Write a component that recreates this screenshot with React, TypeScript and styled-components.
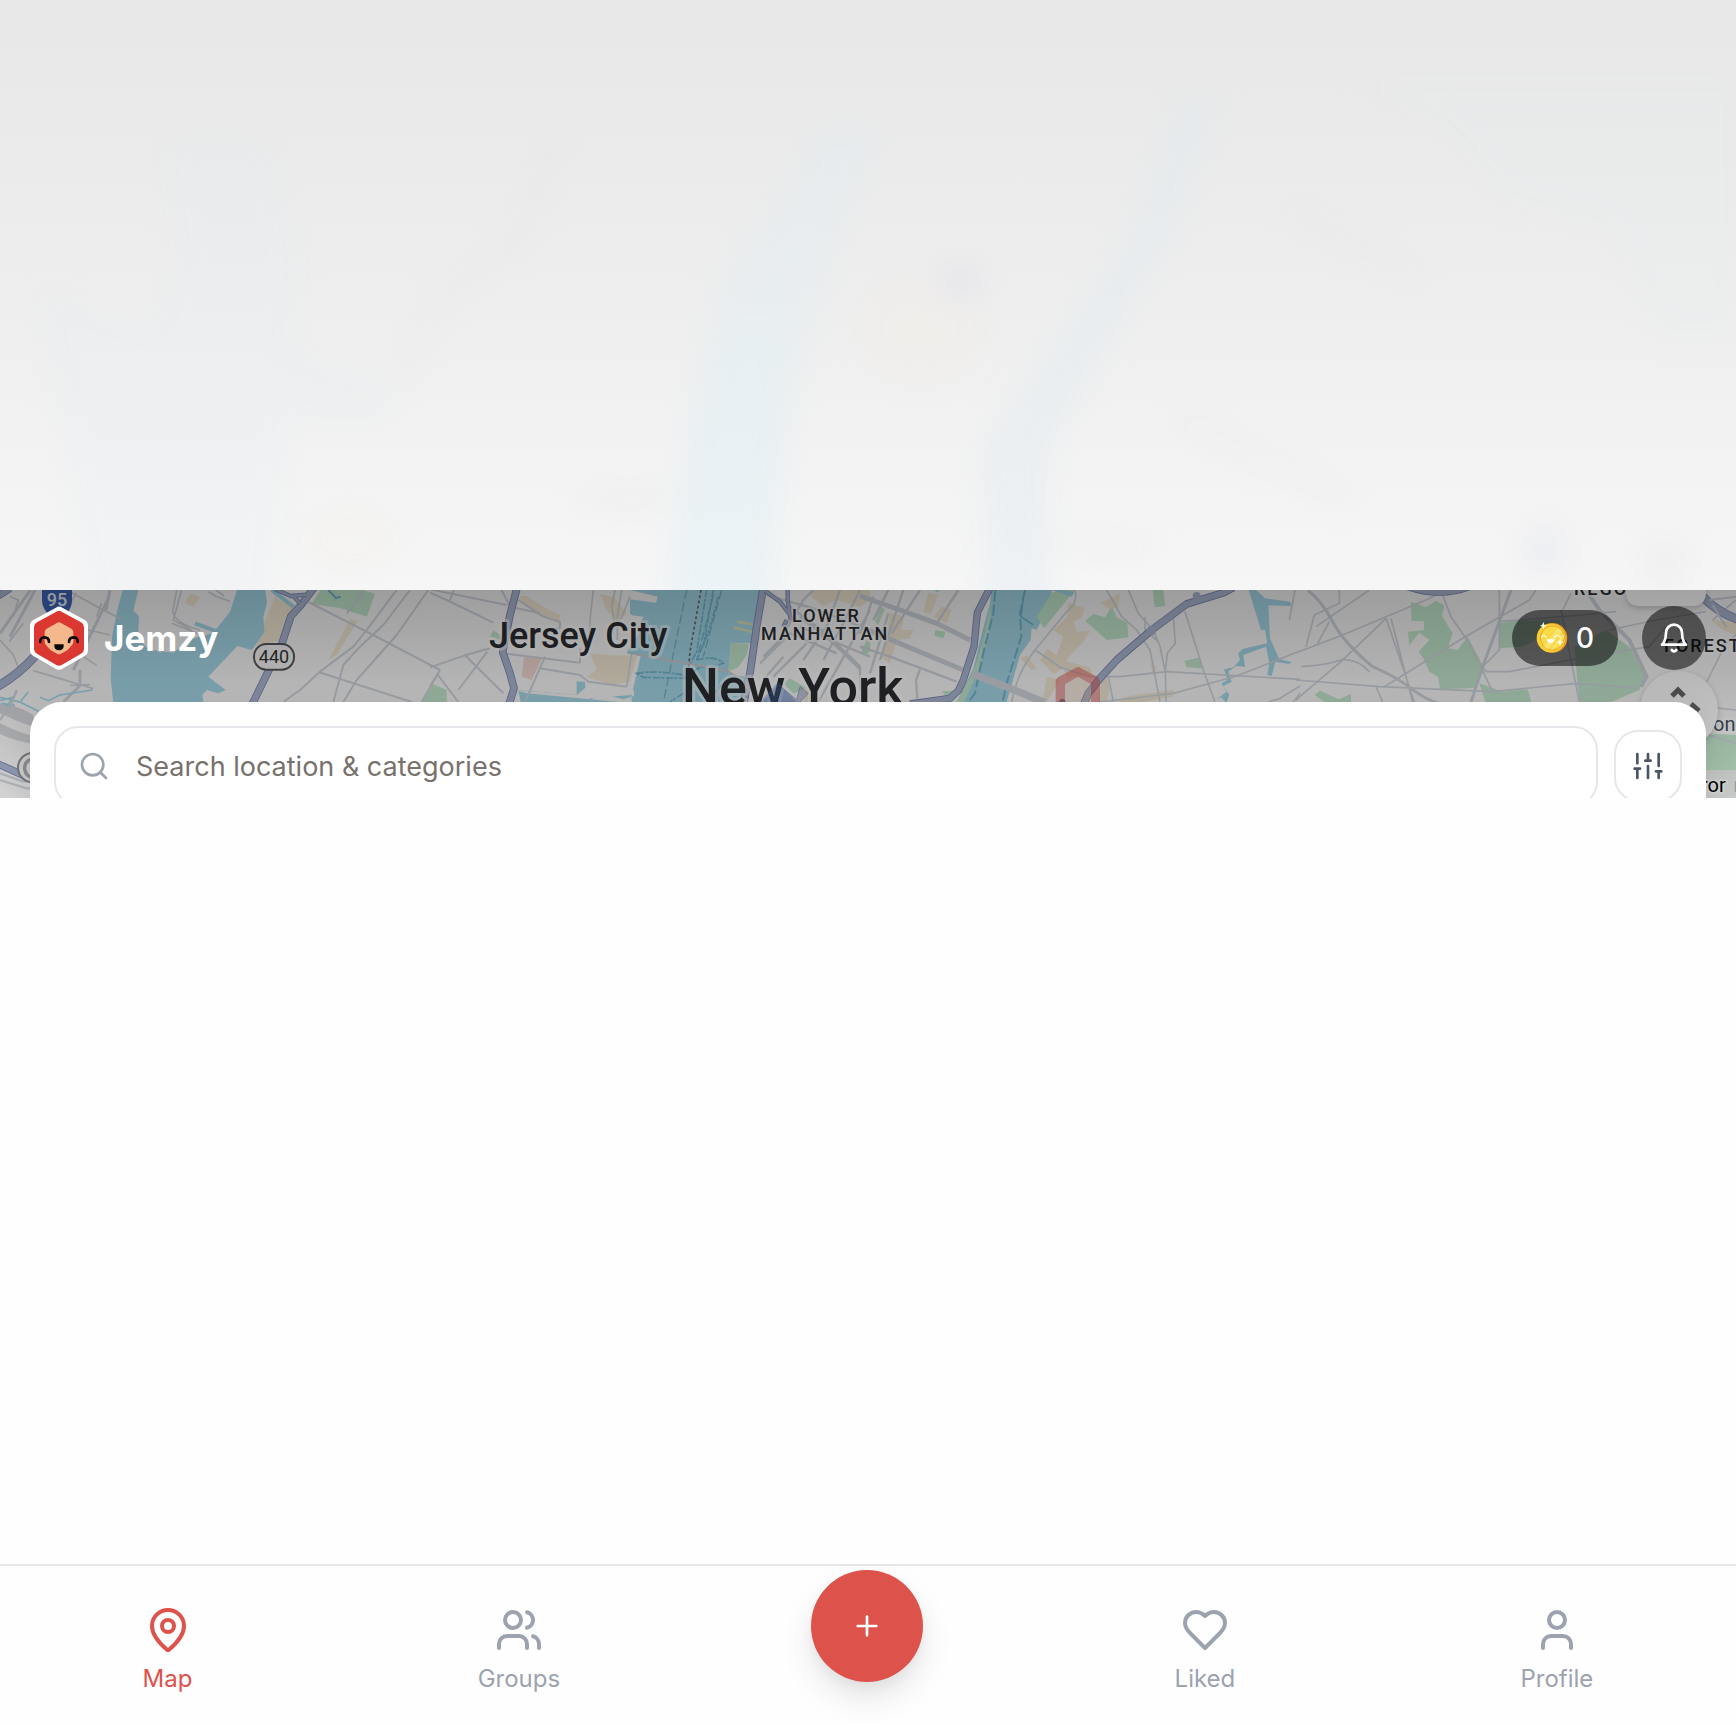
import React from "react";
import styled, { createGlobalStyle } from "styled-components";

const GlobalStyle = createGlobalStyle`
  *, *::before, *::after { box-sizing: border-box; }
  body {
    margin: 0;
    background: #fefefe;
    font-family: Inter, "Liberation Sans", sans-serif;
    -webkit-font-smoothing: antialiased;
  }
  button, input { font: inherit; margin: 0; }
`;

const Page = styled.div`
  display: flex;
  flex-direction: column;
  min-height: 100vh;
  background: #fefefe;
`;

const Veil = styled.div`
  flex: none;
  height: 590px;
  overflow: hidden;
  background: linear-gradient(180deg, #e7e7e7 0%, #efefef 55%, #f6f6f6 100%);
  svg { display: block; width: 100%; height: 100%; }
`;

const MapStrip = styled.section`
  flex: none;
  display: grid;
  height: 208px;
  overflow: hidden;
  & > * { grid-area: 1 / 1; min-width: 0; }
`;

const MapDrawing = styled.svg`
  display: block;
  width: 100%;
  height: 208px;
`;

const MapLabel = styled.text<{ $size: number; $tone?: string; $spaced?: boolean; $weight?: number }>`
  font-family: Roboto, "Liberation Sans", sans-serif;
  font-size: ${(p) => p.$size}px;
  font-weight: ${(p) => p.$weight ?? 500};
  letter-spacing: ${(p) => (p.$spaced ? "2px" : "normal")};
  fill: ${(p) => p.$tone ?? "#2a2c30"};
  stroke: rgba(255, 255, 255, 0.5);
  stroke-width: ${(p) => (p.$size > 30 ? 6 : 4)}px;
  stroke-linejoin: round;
  paint-order: stroke;
`;

const ShieldLabel = styled.text<{ $weight: number }>`
  font-family: Roboto, "Liberation Sans", sans-serif;
  font-size: 18px;
  font-weight: ${(p) => p.$weight};
  text-anchor: middle;
`;

const Shade = styled.div`
  display: flex;
  flex-direction: column;
  gap: 32px;
  height: 208px;
  padding: 16px 30px 0;
  background: linear-gradient(180deg, rgba(0, 0, 0, 0.36), rgba(0, 0, 0, 0.14));
`;

const TopBar = styled.header`
  display: flex;
  align-items: center;
  justify-content: space-between;
  height: 64px;
`;

const Brand = styled.a`
  display: flex;
  align-items: center;
  gap: 16px;
  color: #fff;
  font-size: 35px;
  font-weight: 700;
  line-height: 40px;
  text-decoration: none;
`;

const TopActions = styled.div`
  display: flex;
  align-items: center;
  gap: 24px;
`;

const CoinPill = styled.button`
  display: flex;
  align-items: center;
  gap: 8px;
  height: 56px;
  padding: 0 24px;
  border: 0;
  border-radius: 28px;
  background: rgba(0, 0, 0, 0.52);
  color: #fff;
  font-size: 28px;
  font-weight: 500;
  line-height: 40px;
`;

const RoundButton = styled.button`
  display: grid;
  place-items: center;
  width: 64px;
  height: 64px;
  padding: 0;
  border: 0;
  border-radius: 50%;
  background: rgba(0, 0, 0, 0.52);
  color: #fff;
`;

const SearchCard = styled.form`
  display: flex;
  flex: none;
  align-items: center;
  gap: 16px;
  padding: 24px;
  border-radius: 32px;
  background: #fff;
  box-shadow: 0 8px 30px rgba(0, 0, 0, 0.1);
`;

const SearchField = styled.label`
  display: flex;
  flex: 1;
  align-items: center;
  gap: 24px;
  height: 80px;
  padding: 0 22px;
  border: 2px solid #e5e7eb;
  border-radius: 24px;
  color: #9ca3af;
  svg { flex: none; }
`;

const SearchInput = styled.input`
  flex: 1;
  min-width: 0;
  padding: 2px 2px 0;
  border: 0;
  outline: 0;
  background: transparent;
  color: #1c1917;
  font-size: 27px;
  line-height: 40px;
  &::placeholder { color: #78716c; opacity: 1; }
`;

const FilterButton = styled.button`
  display: grid;
  place-items: center;
  width: 68px;
  height: 72px;
  padding: 0;
  border: 2px solid #e5e7eb;
  border-radius: 24px;
  background: #fff;
  color: #4b5563;
`;

const Content = styled.main`
  flex: 1;
`;

const BottomNav = styled.nav`
  display: flex;
  justify-content: space-around;
  align-items: flex-start;
  padding: 40px 0 30px;
  border-top: 2px solid #e5e7eb;
  background: #fefefe;
`;

const NavItem = styled.button<{ $active?: boolean }>`
  display: flex;
  flex-direction: column;
  align-items: center;
  gap: 8px;
  padding: 0;
  border: 0;
  background: none;
  color: ${(p) => (p.$active ? "#de524c" : "#9ca3af")};
  font-size: 24px;
  font-weight: 400;
  line-height: 34px;
`;

const AddButton = styled.button`
  display: grid;
  place-items: center;
  width: 112px;
  height: 112px;
  margin: -36px -34px 0;
  padding: 0;
  border: 0;
  border-radius: 50%;
  background: #de524c;
  color: #fff;
  box-shadow: 0 16px 32px rgba(0, 0, 0, 0.1), 0 6px 12px rgba(0, 0, 0, 0.04);
`;

const Icon = ({ size, children }: { size: number; children: React.ReactNode }) => (
  <svg width={size} height={size} viewBox="0 0 24 24" fill="none" stroke="currentColor"
    strokeWidth={2} strokeLinecap="round" strokeLinejoin="round" aria-hidden="true">
    {children}
  </svg>
);

const Logo = () => (
  <svg width="58" height="64" viewBox="0 0 174 192" aria-hidden="true">
    <path d="M78 5Q87 -2 97 5L164 42Q174 48 174 59V133Q174 144 164 150L97 188Q87 194 77 188L10 150Q0 144 0 133V59Q0 48 10 42Z" fill="#fff" />
    <path d="M79 17Q87 12 95 17L153 49Q162 54 162 63V129Q162 138 153 143L95 177Q87 182 79 177L21 143Q12 138 12 129V63Q12 54 21 49Z" fill="#db3832" />
    <path d="M81 51Q87 47 93 51L124 68Q130 72 130 79V107Q130 112 126 117L112 133L93 143Q87 147 81 143L62 133L48 117Q44 112 44 107V79Q44 72 50 68Z" fill="#f5b88c" />
    <path d="M31 108Q30 94 43 94Q57 94 57 108M117 108Q117 94 131 94Q144 94 143 108" fill="none" stroke="#0b0808" strokeWidth="8" strokeLinecap="round" />
    <path d="M73 115H101Q103 133 87 133Q71 133 73 115Z" fill="#0b0808" />
  </svg>
);

const Coin = () => (
  <svg width="32" height="32" viewBox="0 0 96 96" aria-hidden="true">
    <circle cx="49" cy="48" r="45" fill="#eb9a28" />
    <circle cx="45" cy="48" r="43" fill="#f7cf35" />
    <circle cx="49" cy="48" r="36" fill="#f8d946" stroke="#eeaa2c" strokeWidth="3" />
    <path d="M66 18L78 28L36 82L24 74ZM82 36L85 44L52 82L45 83Z" fill="#fbe987" opacity=".65" />
    <path d="M17 46Q22 35 30 45M56 45Q65 35 73 46" fill="none" stroke="#fff8d8" strokeWidth="4" strokeLinecap="round" />
    <path d="M32 50Q44 54 55 50Q54 63 44 63Q33 62 32 50Z" fill="#fff" />
    <path d="M22 0L25 8L32 11L25 14L22 22L19 14L12 11L19 8ZM72 50L75 58L83 61L75 64L72 72L69 64L61 61L69 58Z" fill="#fffbe6" />
  </svg>
);

const LAND = "#f5f5f5";
const WATER = "#a3d6e6";
const DEEP = "#72b3cb";
const PARK = "#c1e5cb";
const SAND = "#f0e6d2";
const ROAD = "#cdd3da";
const HIGHWAY = "#a9b4cf";
const HIGHWAY_EDGE = "#7a86b2";

const Highway = ({ d, width = 20 }: { d: string; width?: number }) => (
  <g fill="none" strokeLinejoin="round">
    <path d={d} stroke={HIGHWAY_EDGE} strokeWidth={width + 5} />
    <path d={d} stroke={HIGHWAY} strokeWidth={width} />
  </g>
);

const Roads = ({ d, width = 6, color = ROAD }: { d: string; width?: number; color?: string }) => (
  <path d={d} fill="none" stroke={color} strokeWidth={width} strokeLinejoin="round" />
);

// Each tile is drawn at three units to the pixel.
const Tile = ({ x, children }: { x: number; children: React.ReactNode }) => (
  <g transform={`translate(${x} -10) scale(${1 / 3})`}>{children}</g>
);

const CityMap = () => (
  <MapDrawing viewBox="0 0 1736 208" preserveAspectRatio="xMidYMid slice" role="img" aria-label="Map of New York">
    <rect width="1736" height="208" fill={LAND} />
    <Tile x={0}>
      <path d="M0 370L20 372Q70 385 100 405V440Q50 425 0 400ZM0 430Q60 460 100 468V492Q40 482 0 462Z" fill="#d2d4d8" />
      <path d="M825 50L882 85L862 180L770 192L800 110ZM572 40L600 52L580 82L554 68ZM1050 118L1072 124L1010 225L985 240Z" fill={SAND} />
      <path d="M935 72L962 30H1090L1125 42L1100 110L1020 84ZM1264 366L1298 312L1340 330V380Z" fill={PARK} />
      <path d="M985 30L1008 54L1022 50" fill="none" stroke={DEEP} strokeWidth="6" />
      <path d="M368 30H415L400 92L417 108L414 175L445 208L520 218L572 178L638 160L690 96L711 30H796L801 68L790 110L793 155L770 190L755 210L712 198L625 290L677 330L655 340L620 330L607 346L611 370H340L332 295L336 170L352 90Z" fill={WATER} />
      <path d="M585 130L650 154M815 30L880 80" stroke={WATER} strokeWidth="12" fill="none" />
      <path d="M410 178L480 214L530 180L525 205" stroke={LAND} strokeWidth="6" fill="none" />
      <Roads width={9} d="M30 170L105 30M0 160L70 60L92 30M220 270L325 55M240 310V270M245 312L190 366M330 30L318 90" />
      <Roads width={5} d="M0 180L40 225L56 265M100 272L280 326M200 30L300 85L365 118M230 40L180 115M265 150L330 165M235 220L290 256M130 200L170 230M28 185L70 130M305 70L290 110M30 50L55 60L40 110M210 316L270 314" />
      <Roads width={5} d="M530 30L518 95Q525 130 600 150M545 30L520 120L575 150M625 35L650 50L690 64M648 30L672 48M515 130L590 160" />
      <Roads d="M925 66L1110 160L1320 270M1230 30L1150 135L1080 200L1030 255L1000 366M1190 30L1100 150L1060 200L960 275L900 330L850 366M1285 30L1190 165L1070 300L1030 366M955 276L1236 366M1320 270L1265 366M1040 100L1065 70L1090 30" />
      <path d="M0 352L60 366L85 335M0 362L38 352L20 380M60 366L128 400L215 385M120 352L145 362L180 345L278 330M5 370L45 376" fill="none" stroke={WATER} strokeWidth="5" />
      <Roads width={7} d="M50 330L35 370L0 420M0 580L70 605L100 600M0 600L80 625H100M20 560L70 585" />
      <Highway width={22} d="M-20 326Q50 290 105 228L160 165" />
      <Highway width={18} d="M-10 50L30 25M-10 550L110 604" />
      <Highway width={18} d="M952 10L903 75L873 108L846 190L755 376" />
      <Highway width={8} d="M826 28L872 48L920 44M880 48L900 70" />
      <circle cx="98" cy="563" r="44" fill="#f2f2f2" stroke="#898c90" strokeWidth="6" />
      <path d="M100 535Q72 542 74 568Q78 590 100 594" fill="none" stroke="#a5a7aa" strokeWidth="10" />
      <path d="M126 30H216V62Q214 100 171 120Q128 98 126 62Z" fill="#3c62b5" />
      <rect x="762" y="192" width="120" height="77" rx="37" fill="#f4f4f4" stroke="#575757" strokeWidth="6" />
    </Tile>
    <Tile x={430}>
      <path d="M600 30H990L970 190L903 188L895 280L945 290V380H275L265 330L440 345V304L465 306L468 340L478 355L605 345L632 228L590 220L600 200L640 140L600 100Z" fill={WATER} />
      <path d="M600 30L684 50L678 68L600 58ZM596 104L640 110L632 128L600 140ZM440 345L470 320L480 358L530 345L580 358L612 348V330L530 332V318L605 320V370L290 340L255 330Z" fill={LAND} />
      <path d="M904 188L956 192L950 225L925 262L895 275ZM190 150L212 166V180L180 170ZM0 320L42 330L10 366H0ZM1080 295L1130 325L1090 340L1060 310ZM1290 200L1320 190V215H1300Z" fill={PARK} />
      <path d="M282 230L336 234L305 300L275 290Z" fill="#f0d6d0" />
      <path d="M922 120L972 130V138L922 130ZM910 138L968 152V160L910 146Z" fill="#d6e0bb" />
      <path d="M270 48L290 48L345 84L392 105L385 130L330 108L275 68ZM510 42L552 52L590 100L560 130L530 90ZM480 220L530 225L620 228L600 305L545 315L470 290L500 270ZM1150 30H1320V60L1290 80L1220 60L1180 78L1140 48ZM1130 320L1165 335L1150 366H1120Z" fill={SAND} />
      <path d="M770 30L720 270L700 366M850 45L800 240M875 30L820 230" fill="none" stroke={DEEP} strokeWidth="4" strokeDasharray="28 10" />
      <path d="M830 30L800 215L770 270M850 30L820 200M865 50L838 150L800 240M620 280Q680 270 760 285L770 295L640 292ZM800 240Q860 225 880 250L840 262Q800 255 790 280M760 340L720 366M880 310L830 366" fill="none" stroke={DEEP} strokeWidth="5" strokeDasharray="22 5 9 3" />
      <path d="M813 30L780 215L776 262" fill="none" stroke="#6b6b78" strokeWidth="5" strokeDasharray="9 7" />
      <Roads width={6} d="M0 38L50 60L190 128M60 60L72 30M0 28L230 75M215 30L240 80L330 100M0 262L105 226L180 205M20 280L85 366M105 226L220 340M0 318L25 280M172 215L85 330M220 220L450 248V205M345 230L285 366M330 265L450 285L475 305L590 320M265 60L340 110L390 125V145L345 150" />
      <Roads width={5} d="M490 30L480 120V200M555 30L545 80L552 120L540 200M575 30L562 110V180M600 50L572 120M590 320L605 220" />
      <path d="M600 220L890 272L930 295" fill="none" stroke="#cdc6cb" strokeWidth="5" />
      <Roads width={7} d="M1010 45L1150 85L1320 150M1000 230L1050 180L1120 60L1150 30M990 250L1080 160L1220 220M1030 290L1130 190M1080 80L1160 140L1260 230L1290 260V330M1165 366L1230 250L1320 90M1110 140L1200 180L1320 230M1230 30L1190 140L1120 240M1290 30L1240 130L1180 240M1000 300L1060 230" />
      <Roads width={12} d="M1160 140L1250 225L1290 265M1110 110L1180 160" />
      <Highway width={18} d="M262 20L240 105L218 215L240 280L252 325L236 376" />
      <Highway width={18} d="M1002 10L980 140L960 280L940 376" />
      <Highway width={8} d="M1005 32L1050 65L1080 105M1073 30V60L1082 120M1060 140L1070 120" />
      <path d="M1000 366L1045 315L1100 360L1110 320L1135 340L1110 366Z" fill={HIGHWAY} stroke={HIGHWAY_EDGE} strokeWidth="3" opacity=".7" />
    </Tile>
    <Tile x={860}>
      <path d="M395 20L575 30L574 62L530 150L515 145L512 180L480 225L440 366H290L340 266L368 150L390 70Z" fill={WATER} />
      <path d="M575 38L610 30H645L552 145L530 110ZM675 122L700 102L735 112L755 78L770 112L802 128L805 172L740 180ZM878 30H910L916 78L884 82ZM973 243L1020 232L1026 265L980 262ZM225 150L256 155L250 175L224 168ZM246 334L280 332L265 360ZM45 125L62 80L74 88L55 135ZM5 215L20 180L32 190L20 230ZM220 30H240L234 38Z" fill={PARK} />
      <path d="M395 60L372 170L344 266L290 366H312L358 266L385 170Z" fill={PARK} />
      <path d="M575 30L636 50L642 36L600 30Z" fill={WATER} />
      <path d="M625 68L675 85L665 112L640 125L652 155L690 152L670 185L625 232L610 265L580 282L540 240L562 208L590 225L610 170L580 150L622 112ZM720 70L780 40L775 80L750 88ZM205 38L236 45L212 102L190 95ZM90 98L132 110L125 150L160 150L150 175L110 180L90 250L62 230L80 160ZM220 110L245 80L275 88L260 130ZM480 234L500 226L530 265L515 270ZM560 290L600 300L560 366H548ZM600 240L690 262L700 290L620 290ZM730 275L750 320L740 366H715ZM790 350L940 330V350L850 366H780ZM870 250L890 260L880 285Z" fill={SAND} />
      <path d="M1166 30H1188L1215 55L1290 65L1296 78L1225 76L1230 175L1258 238L1295 246L1288 252L1246 245L1235 288L1222 285L1228 250L1218 200L1150 225L1155 260L1128 258L1105 275L1115 305L1090 318L1108 345L1100 366H1095L1085 352L1070 358L1100 335L1084 310L1102 300L1092 268L1120 262L1140 240L1134 220L1150 206L1222 190L1215 150H1203Z" fill={WATER} />
      <path d="M406 30L400 100L372 210L345 340L325 366M495 30L480 100L484 170L440 310L428 366" fill="none" stroke={DEEP} strokeWidth="6" strokeDasharray="34 10" />
      <path d="M490 50L483 110L520 135" fill="none" stroke={DEEP} strokeWidth="5" />
      <Roads width={15} d="M0 48L120 90L230 130L330 180M0 140L130 195L310 270" />
      <Roads width={7} d="M0 200L90 230L290 305M40 50L20 110L0 160M85 100L30 280M85 30L40 120M130 30L60 240M180 30L95 160M295 30L230 130M180 268L168 300L172 356" />
      <Roads width={5} d="M645 30Q655 70 620 95L525 210Q470 280 455 366M525 210Q570 240 600 262L690 290L780 290L920 275L1320 298M740 30L785 110L830 150L870 210L900 366M805 30L835 100L880 150L900 200L916 275L918 366M940 110L946 190L922 220L916 275M975 95L1030 270L1065 366M1320 213L1130 288L940 340L720 366M745 290L760 366M1305 30L1288 120M1320 318L1260 355L1225 366M1300 366L1320 340M855 110V150L890 180" />
      <path d="M340 282L450 325L555 368" fill="none" stroke="#d1d4dd" strokeWidth="22" />
      <path d="M600 366Q605 355 615 366" fill={HIGHWAY} stroke={HIGHWAY_EDGE} strokeWidth="8" />
      <Highway d="M397 10L352 98L342 200L310 300L295 332L270 355L150 372" width={17} />
      <Highway d="M670 376L685 340L720 295L770 240L875 150L980 72L1092 38L1120 22" width={18} />
      <circle cx="874" cy="152" r="14" fill={HIGHWAY} />
      <circle cx="1010" cy="48" r="12" fill={HIGHWAY} />
      <g opacity=".45">
        <path fillRule="evenodd" d="M646 264Q654 258 662 264L712 291Q720 296 720 304V380H587V304Q587 296 595 291ZM654 291L693 313V380H615V313Z" fill="#df4a45" />
        <path d="M654 291L693 313V380H615V313Z" fill="#f3cda6" opacity=".6" />
      </g>
    </Tile>
    <Tile x={1296}>
      <path d="M345 66L390 82L420 62L445 76L438 108L470 160L455 205L485 210L515 170L565 265L535 324L432 328L426 290L400 275L382 235L368 215L400 180L370 158L340 196L336 155L385 150L383 124L346 122ZM610 130L660 124L790 120L800 160L730 175L680 200L610 205ZM835 200L930 150L1000 200L1050 290L1030 330L945 366H850ZM550 310L620 335L695 328L706 366H568ZM56 345L72 332L128 358L165 342V366H85ZM1220 460L1320 465V570H1220Z" fill={PARK} />
      <path d="M1245 120L1320 125V165L1280 150Z" fill={SAND} />
      <Roads width={9} d="M35 30Q75 60 110 125T230 260Q300 290 345 325T430 370M645 30L560 260L525 366" />
      <Roads width={12} d="M880 45L910 90L1000 180L1052 290L1035 320" />
      <Roads width={5} d="M0 218L140 165L390 60L450 30M130 30V70L55 105L30 200M220 30L60 140M100 125L65 190M0 360L40 325L135 245L270 115M285 115L338 320L350 366M270 115L320 260L355 366M0 300L250 320L590 335L840 310L1030 325M265 320L500 175L700 60L720 30M440 45L465 110L520 190L590 335M610 30V210L560 260M560 260L570 275H640L820 240L1060 200M610 125L800 110L960 95M795 90L850 366M800 90L825 40M240 320L260 366M15 260Q100 255 140 238Q190 240 220 275M940 150L1080 120L1230 95M1060 200L1110 140M1220 330L1290 190L1320 165M1250 120L1320 60M1220 380L1320 390M1220 460L1320 490" />
      <Highway width={17} d="M330 18Q430 54 520 20" />
      <Highway width={22} d="M1215 45Q1260 95 1330 120" />
      <Roads width={6} d="M1240 60L1320 50M1250 75L1290 140" />
      <path d="M1230 570H1320V654H1230Z" fill="#e7ebe8" />
      <path d="M1316 604H1320V636H1316Z" fill="#b9bbbd" />
    </Tile>
    <MapLabel x="489" y="58" $size={36}>Jersey City</MapLabel>
    <MapLabel x="792" y="32" $size={18} $spaced>LOWER</MapLabel>
    <MapLabel x="761" y="50" $size={18} $spaced>MANHATTAN</MapLabel>
    <MapLabel x="682" y="115" $size={52}>New York</MapLabel>
    <MapLabel x="1574" y="5" $size={18} $spaced>REGO</MapLabel>
    <MapLabel x="1664" y="62" $size={18} $spaced>FOREST</MapLabel>
    <MapLabel x="1713" y="141" $size={20} $tone="#46505f" $weight={400}>on</MapLabel>
    <MapLabel x="1701" y="202" $size={20} $tone="#000" $weight={400}>ror</MapLabel>
    <ShieldLabel x="57" y="16" fill="#e5ebf5" $weight={500}>95</ShieldLabel>
    <ShieldLabel x="274" y="73" fill="#333" $weight={400}>440</ShieldLabel>
    <path d="M758 114L778 92L798 114Z" fill="#4d7fcb" opacity=".35" />
    <g style={{ filter: "drop-shadow(0 2px 3px rgba(0,0,0,.2))" }}>
      <path d="M1626 -10V2Q1626 16 1640 16H1692Q1706 16 1706 2V-10Z" fill="#fff" />
      <circle cx="1679" cy="120" r="39" fill="#fbfbfb" />
    </g>
    <path d="M1672 106L1678 100L1684 106M1691 114L1699 121" fill="none" stroke="#666" strokeWidth="5" />
  </MapDrawing>
);

const VeilMap = () => (
  <svg viewBox="0 0 1736 590" preserveAspectRatio="none" aria-hidden="true">
    <defs>
      <filter id="soften" x="-20%" y="-20%" width="140%" height="140%"><feGaussianBlur stdDeviation="14" /></filter>
    </defs>
    <g filter="url(#soften)" opacity=".55">
      <path d="M665 600L690 430L720 280L790 190L820 130H880L840 230L790 400L770 600Z" fill="#dceef5" opacity=".5" />
      <path d="M665 620L690 430L720 330L790 330L770 620Z" fill="#dcf0f6" opacity=".6" />
      <path d="M985 620L980 450L1050 350L1130 240L1180 100H1220L1170 240L1080 390L1050 450V620Z" fill="#dceaf2" opacity=".6" />
      <path d="M165 140H270L300 260L290 350L390 380L395 420H290L270 620H90L60 420L40 290L150 330L180 260Z" fill="#e2eaf2" opacity=".35" />
      <path d="M1350 80H1736V340H1660L1610 230L1500 200L1450 130Z" fill="#dfe8ec" opacity=".22" />
      <ellipse cx="920" cy="330" rx="60" ry="50" fill="#f5ecdf" opacity=".35" />
      <ellipse cx="350" cy="540" rx="50" ry="28" fill="#f3eee5" opacity=".4" />
      <ellipse cx="961" cy="282" rx="20" ry="16" fill="#d8daea" opacity=".8" />
      <ellipse cx="630" cy="500" rx="55" ry="10" fill="#e6e6e8" opacity=".6" />
      <ellipse cx="1100" cy="545" rx="60" ry="10" fill="#e8e8ea" opacity=".5" />
      <ellipse cx="1545" cy="550" rx="24" ry="26" fill="#e0e3ef" opacity=".6" />
      <ellipse cx="1665" cy="565" rx="22" ry="26" fill="#e4e4e8" opacity=".6" />
      <path d="M560 130L520 240L440 300L400 380M1180 420L1350 500M1290 210L1420 280" stroke="#e3e3e4" strokeWidth="16" fill="none" opacity=".4" />
    </g>
  </svg>
);

export default function App() {
  return (
    <>
      <GlobalStyle />
      <Page>
        <Veil><VeilMap /></Veil>
        <MapStrip>
          <CityMap />
          <Shade>
            <TopBar>
              <Brand href="#"><Logo />Jemzy</Brand>
              <TopActions>
                <CoinPill type="button"><Coin />0</CoinPill>
                <RoundButton type="button" aria-label="Notifications">
                  <Icon size={32}>
                    <path d="M6 8a6 6 0 0 1 12 0c0 7 3 9 3 9H3s3-2 3-9" />
                    <path d="M10.3 21a1.94 1.94 0 0 0 3.4 0" />
                  </Icon>
                </RoundButton>
              </TopActions>
            </TopBar>
            <SearchCard onSubmit={(e) => e.preventDefault()}>
              <SearchField>
                <Icon size={32}>
                  <circle cx="11" cy="11" r="8" />
                  <path d="m21 21-4.3-4.3" />
                </Icon>
                <SearchInput type="text" aria-label="Search" placeholder="Search location &amp; categories" />
              </SearchField>
              <FilterButton type="button" aria-label="Filters">
                <Icon size={32}>
                  <path d="M4 21v-7M4 10V3M12 21v-9M12 8V3M20 21v-5M20 12V3M2 14h4M10 8h4M18 16h4" />
                </Icon>
              </FilterButton>
            </SearchCard>
          </Shade>
        </MapStrip>
        <Content />
        <BottomNav>
          <NavItem type="button" $active>
            <Icon size={48}>
              <path d="M20 10c0 4.993-5.539 10.193-7.399 11.799a1 1 0 0 1-1.202 0C9.539 20.193 4 14.993 4 10a8 8 0 0 1 16 0" />
              <circle cx="12" cy="10" r="3" />
            </Icon>
            Map
          </NavItem>
          <NavItem type="button">
            <Icon size={48}>
              <path d="M16 21v-2a4 4 0 0 0-4-4H6a4 4 0 0 0-4 4v2" />
              <circle cx="9" cy="7" r="4" />
              <path d="M22 21v-2a4 4 0 0 0-3-3.87M16 3.13a4 4 0 0 1 0 7.75" />
            </Icon>
            Groups
          </NavItem>
          <AddButton type="button" aria-label="Add">
            <Icon size={32}><path d="M5 12h14M12 5v14" /></Icon>
          </AddButton>
          <NavItem type="button">
            <Icon size={48}>
              <path d="M19 14c1.49-1.46 3-3.21 3-5.5A5.5 5.5 0 0 0 16.5 3c-1.76 0-3 .5-4.5 2-1.5-1.5-2.74-2-4.5-2A5.5 5.5 0 0 0 2 8.5c0 2.3 1.5 4.05 3 5.5l7 7Z" />
            </Icon>
            Liked
          </NavItem>
          <NavItem type="button">
            <Icon size={48}>
              <path d="M19 21v-2a4 4 0 0 0-4-4H9a4 4 0 0 0-4 4v2" />
              <circle cx="12" cy="7" r="4" />
            </Icon>
            Profile
          </NavItem>
        </BottomNav>
      </Page>
    </>
  );
}
